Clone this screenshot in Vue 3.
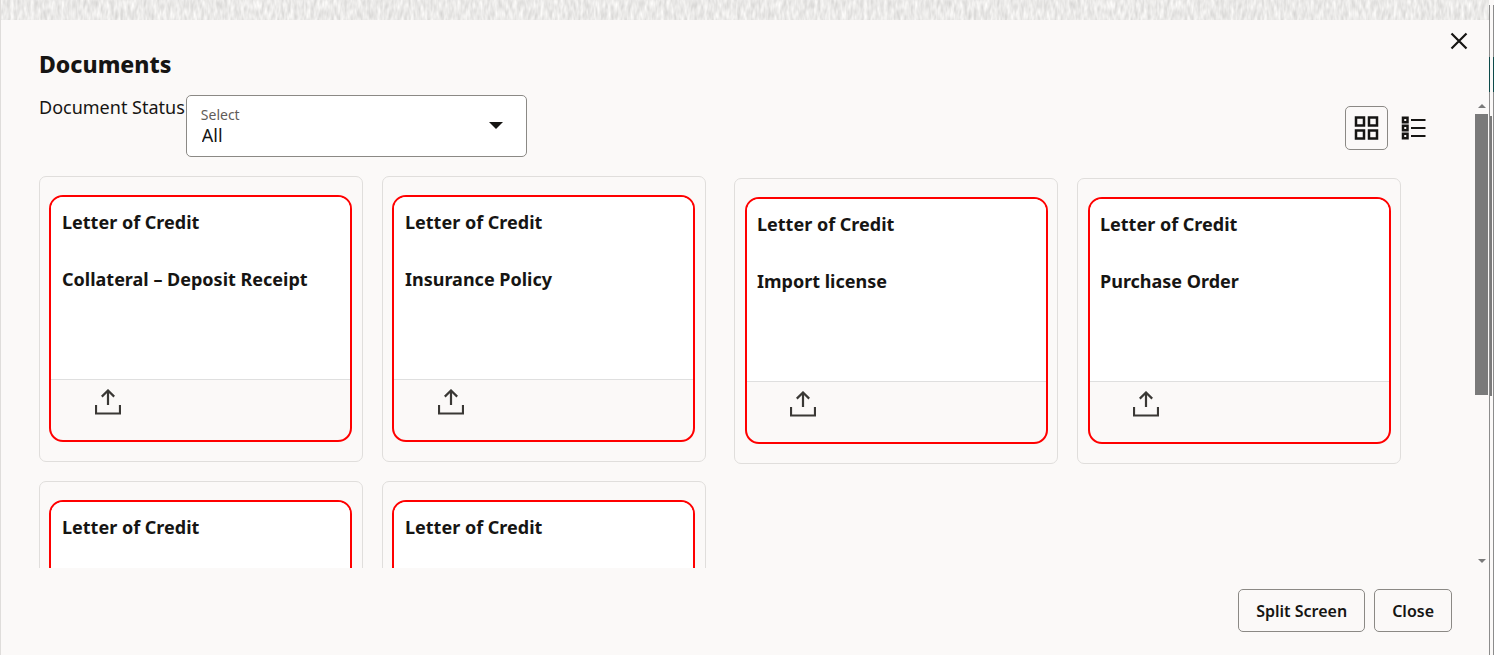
<script setup>
import { ref } from 'vue'

const status = ref('All')
const view = ref('grid')
const groups = [
  [
    { id: 1, name: 'Collateral – Deposit Receipt' },
    { id: 2, name: 'Insurance Policy' },
    { id: 3 },
    { id: 4 },
  ],
  [
    { id: 5, name: 'Import license' },
    { id: 6, name: 'Purchase Order' },
  ],
]
</script>

<template>
  <div class="page">
    <section class="dialog" role="dialog" aria-labelledby="dialog-title">
      <svg class="texture" aria-hidden="true">
        <filter id="weave" x="0" y="0" width="100%" height="100%" color-interpolation-filters="sRGB">
          <feTurbulence type="fractalNoise" baseFrequency="0.3 0.1" numOctaves="2" seed="4" />
          <feColorMatrix values="0.22 0 0 0 0.81  0.22 0 0 0 0.806  0.22 0 0 0 0.80  0 0 0 0 1" />
        </filter>
        <rect width="100%" height="100%" filter="url(#weave)" />
      </svg>

      <header class="header">
        <h1 id="dialog-title">Documents</h1>
        <button class="dismiss" type="button" aria-label="Dismiss">
          <svg width="18" height="18" viewBox="0 0 18 18"><path d="M1.500 1.500l15 15M16.500 1.500l-15 15" stroke="#161513" stroke-width="2.200" fill="none" /></svg>
        </button>
      </header>

      <div class="scroller">
        <div class="content">
          <div class="toolbar">
            <label class="status-label" for="status">Document Status</label>
            <div class="field">
              <span class="hint">Select</span>
              <select id="status" v-model="status">
                <option>All</option>
              </select>
              <svg class="caret" width="14" height="7" viewBox="0 0 14 7"><path d="M0 0h14l-7 7z" fill="#161513" /></svg>
            </div>
            <div class="views">
              <button type="button" aria-label="Grid view" :class="{ active: view === 'grid' }" @click="view = 'grid'">
                <svg width="25" height="24" viewBox="0 0 25 24" fill="none" stroke="#161513" stroke-width="2.500">
                  <path d="M2 1.500h8v8h-8zM15 1.500h8v8h-8zM2 14.500h8v8h-8zM15 14.500h8v8h-8z" />
                </svg>
              </button>
              <button type="button" aria-label="List view" :class="{ active: view === 'list' }" @click="view = 'list'">
                <svg width="25" height="24" viewBox="0 0 25 24" fill="none" stroke="#161513">
                  <path stroke-width="2.500" d="M2 1.800h4.500v4.500h-4.500zM2 9.800h4.500v4.500h-4.500zM2 17.800h4.500v4.500h-4.500z" />
                  <path stroke-width="2.200" d="M10 4h14.500M10 12h14.500M10 20h14.500" />
                </svg>
              </button>
            </div>
          </div>

          <div class="groups">
            <div v-for="(group, g) in groups" :key="g" class="group">
              <article v-for="doc in group" :key="doc.id" class="card">
                <div class="tile">
                  <div class="body">
                    <h2>Letter of Credit</h2>
                    <h3 v-if="doc.name">{{ doc.name }}</h3>
                  </div>
                  <div class="actions">
                    <button type="button" aria-label="Upload">
                      <svg width="26" height="26" viewBox="0 0 26 26" fill="none" stroke="#3a3835" stroke-width="2.200">
                        <path d="M1 16v8.500h24V16M13 16V2M6.800 7.600L13 1.500l6.200 6.100" />
                      </svg>
                    </button>
                  </div>
                </div>
              </article>
            </div>
          </div>
        </div>
        <div class="scrollbar" aria-hidden="true">
          <svg width="8" height="4" viewBox="0 0 8 4"><path d="M0 4h8l-4-4z" fill="#7a7a7a" /></svg>
          <div class="track"><div class="thumb"></div></div>
          <svg width="8" height="4" viewBox="0 0 8 4"><path d="M0 0h8l-4 4z" fill="#7a7a7a" /></svg>
        </div>
      </div>

      <footer class="footer">
        <button type="button">Split Screen</button>
        <button type="button">Close</button>
      </footer>
    </section>
    <div class="edge" aria-hidden="true"><div class="edge-thumb"></div></div>
  </div>
</template>

<style>
body { margin: 0; background: #fbf9f8; }
</style>

<style scoped>
* { box-sizing: border-box; }
.page {
  display: flex;
  height: 100vh;
  overflow: hidden;
  background: #fbf9f8;
  color: #161513;
  font-family: "Noto Sans", "Open Sans", sans-serif;
  font-size: 18px;
  line-height: 24px;
}
button, select { font: inherit; color: inherit; background: none; border: 0; padding: 0; cursor: pointer; }
svg { display: block; }
.dialog { flex: 1; min-width: 0; display: flex; flex-direction: column; border-left: 1px solid #dfdddb; }
.texture { width: 100%; height: 20px; flex: none; }
.header { display: flex; justify-content: space-between; align-items: flex-start; height: 75px; flex: none; padding: 12px 21px 0 38px; }
h1 { margin: 16px 0 0; font-size: 23px; line-height: 32px; font-weight: 800; }
.scroller { flex: 1; min-height: 0; display: flex; overflow: hidden; }
.content { flex: 1; min-width: 0; padding: 0 74px 0 38px; }
.toolbar { display: flex; align-items: flex-start; gap: 1px; height: 81px; }
.status-label { white-space: nowrap; }
.field { position: relative; width: 341px; height: 62px; }
.hint { position: absolute; left: 15px; top: 10px; font-size: 14px; line-height: 20px; color: #5f5c59; pointer-events: none; }
select { appearance: none; width: 100%; height: 100%; padding: 18px 40px 0 15px; border: 1px solid #8b8985; border-radius: 5px; background: #fff; }
.caret { position: absolute; right: 24px; top: 27px; pointer-events: none; }
.views { display: flex; gap: 4px; margin: 11px -34px 0 auto; }
.views button { display: grid; place-items: center; width: 43px; height: 44px; border: 1px solid transparent; border-radius: 5px; }
.views .active { border-color: #8b8985; }
.groups { display: grid; grid-template-columns: 1fr 1fr; align-items: start; gap: 28px; }
.group { display: grid; grid-template-columns: 1fr 1fr; gap: 19px; }
.group + .group { margin-top: 2px; }
.card { padding: 18px 10px 19px 9px; border: 1px solid #e0dedc; border-radius: 7px; }
.group + .group .card { padding-left: 10px; padding-right: 9px; }
.tile { height: 247px; display: flex; flex-direction: column; border: 2px solid #f00; border-radius: 14px; overflow: hidden; }
.body { flex: 1; padding: 13px 10px; background: #fff; border-bottom: 1px solid #dfdfdf; }
h2, h3 { margin: 0; font-size: 18px; line-height: 24px; font-weight: 700; white-space: nowrap; }
h3 { margin-top: 33px; }
.actions { height: 60px; padding: 9px 43px; }
.group:first-child .body { padding-left: 11px; }
.group:first-child .actions { padding-left: 44px; }
.scrollbar { width: 14px; flex: none; display: flex; flex-direction: column; align-items: center; padding: 9px 1px 5px 0; }
.track { flex: 1; width: 100%; padding: 6px 0; }
.thumb { height: 64%; background: #7a7a7a; }
.footer { flex: none; height: 87px; display: flex; justify-content: flex-end; align-items: flex-start; gap: 9px; padding: 21px 37px 0; }
.footer button { height: 43px; padding: 0 17px; border: 1px solid #8b8985; border-radius: 5px; font-size: 16px; font-weight: 600; }
.edge {
  --line: linear-gradient(#8c8c8c 52px, #0d4a4a 52px, #0d4a4a 87px, #8c8c8c 87px);
  width: 5px;
  flex: none;
  margin-top: 5px;
  padding: 111px 0 0 1px;
  background: var(--line) left / 1px 100% no-repeat, var(--line) right / 1px 100% no-repeat;
}
.edge-thumb { width: 2px; height: 280px; background: #7a7a7a; }
</style>
